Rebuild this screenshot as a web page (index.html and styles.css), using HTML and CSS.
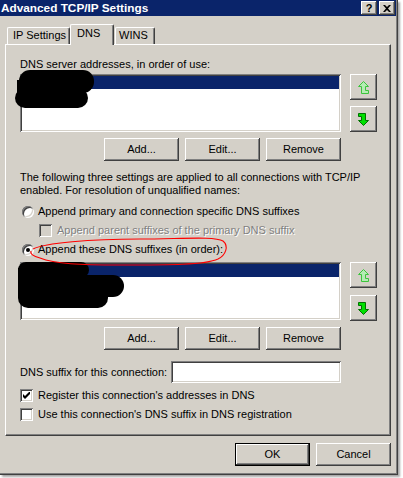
FILE: index.html
```html
<!DOCTYPE html>
<html>
<head>
<meta charset="utf-8">
<title>Advanced TCP/IP Settings</title>
<link rel="stylesheet" href="styles.css">
</head>
<body>
<div class="window">
  <div class="titlebar">
    <span class="title">Advanced TCP/IP Settings</span>
    <div class="capbtns">
      <span class="capbtn help">?</span>
      <span class="capbtn close"><svg width="8" height="7" viewBox="0 0 8 7"><path d="M0 0h2l2 2 2-2h2L5 3.5 8 7H6L4 5 2 7H0l3-3.5z" fill="#000"/></svg></span>
    </div>
  </div>

  <div class="tabs">
    <div class="tab tab-ip">IP Settings</div>
    <div class="tab tab-sel">DNS</div>
    <div class="tab tab-wins">WINS</div>
  </div>

  <div class="panel">
    <div class="label">DNS server addresses, in order of use:</div>
    <div class="listrow">
      <div class="listbox lb1"><div class="selrow"></div></div>
      <div class="sidebtns">
        <div class="btn sq"><svg width="11" height="13" viewBox="0 0 11 13"><polygon class="up" points="0.5,0.5 7.5,0.5 7.5,7.5 10.5,7.5 5.5,12.5 0.5,7.5 3.5,7.5 3.5,3.5 0.5,3.5" transform="rotate(180 5.5 6.5)"/></svg></div>
        <div class="btn sq"><svg width="11" height="13" viewBox="0 0 11 13"><polygon class="down" points="0.5,0.5 7.5,0.5 7.5,7.5 10.5,7.5 5.5,12.5 0.5,7.5 3.5,7.5 3.5,3.5 0.5,3.5"/></svg></div>
      </div>
    </div>
    <div class="btnrow">
      <div class="btn">Add...</div>
      <div class="btn">Edit...</div>
      <div class="btn">Remove</div>
    </div>

    <p class="para">The following three settings are applied to all connections with TCP/IP<br>enabled. For resolution of unqualified names:</p>

    <div class="opt radio-row first"><span class="radio"></span><span>Append primary and connection specific DNS suffixes</span></div>
    <div class="opt chk-row sub"><span class="check dis"></span><span class="dtext">Append parent suffixes of the primary DNS suffix</span></div>
    <div class="opt radio-row"><span class="radio on"></span><span>Append these DNS suffixes (in order):</span></div>

    <div class="listrow lr2">
      <div class="listbox lb2"><div class="selrow"></div></div>
      <div class="sidebtns">
        <div class="btn sq"><svg width="11" height="13" viewBox="0 0 11 13"><polygon class="up" points="0.5,0.5 7.5,0.5 7.5,7.5 10.5,7.5 5.5,12.5 0.5,7.5 3.5,7.5 3.5,3.5 0.5,3.5" transform="rotate(180 5.5 6.5)"/></svg></div>
        <div class="btn sq"><svg width="11" height="13" viewBox="0 0 11 13"><polygon class="down" points="0.5,0.5 7.5,0.5 7.5,7.5 10.5,7.5 5.5,12.5 0.5,7.5 3.5,7.5 3.5,3.5 0.5,3.5"/></svg></div>
      </div>
    </div>
    <div class="btnrow">
      <div class="btn">Add...</div>
      <div class="btn">Edit...</div>
      <div class="btn">Remove</div>
    </div>

    <div class="suffix">
      <span class="suffix-label">DNS suffix for this connection:</span>
      <div class="input"></div>
    </div>
    <div class="opt chk-row low"><span class="check"><svg width="7" height="7" viewBox="0 0 7 7"><path d="M0 2v3l2 2 5-5V-1L2 4z" fill="#000"/></svg></span><span>Register this connection's addresses in DNS</span></div>
    <div class="opt chk-row low"><span class="check"></span><span>Use this connection's DNS suffix in DNS registration</span></div>
  </div>

  <div class="footer">
    <div class="btn default">OK</div>
    <div class="btn">Cancel</div>
  </div>

  <svg class="overlay" width="403" height="478" viewBox="0 0 403 478">
    <g fill="#000">
      <rect x="19" y="70" width="75" height="23" rx="11"/>
      <rect x="15" y="88" width="73" height="20" rx="10"/>
      <rect x="17" y="80" width="40" height="16"/>
      <rect x="18" y="262" width="71" height="16" rx="8"/>
      <rect x="18" y="275" width="106" height="22" rx="11"/>
      <rect x="18" y="287" width="90" height="21" rx="10"/>
      <rect x="18" y="268" width="30" height="30"/>
    </g>
    <path d="M33 249 C45 243, 90 239, 140 239 C180 239, 215 236, 223 241 C229 246, 226 255, 218 259 C205 265, 170 265, 120 265 C80 265, 55 264, 40 258 C33 256, 30 254, 31 251" fill="none" stroke="#f00" stroke-width="1.1"/>
  </svg>
</div>
</body>
</html>
```

FILE: styles.css
```css
* { box-sizing: border-box; }

html, body {
  margin: 0;
  padding: 0;
  background: #ffffff;
}

body {
  font-family: "Liberation Sans", Arial, sans-serif;
  font-size: 11px;
  color: #000;
  width: 403px;
  height: 478px;
  overflow: hidden;
}

.window {
  position: relative;
  width: 398px;
  height: 475px;
  background: #d4d0c8;
  border-right: 1px solid #404040;
  border-bottom: 1px solid #404040;
  box-shadow: inset -1px -1px #808080, 2px 2px 2px rgba(0, 0, 0, 0.35);
}

.titlebar {
  height: 16px;
  margin-right: 1px;
  background: #0a246a;
  display: flex;
  align-items: center;
  justify-content: space-between;
  padding: 0 1px 0 1px;
}

.title {
  color: #fff;
  font-weight: bold;
  font-size: 11.8px;
  line-height: 16px;
  white-space: nowrap;
}

.capbtns {
  display: flex;
  gap: 2px;
}

.capbtn {
  width: 16px;
  height: 14px;
  background: #d4d0c8;
  box-shadow: inset -1px -1px #404040, inset 1px 1px #fff, inset -2px -2px #808080;
  display: flex;
  align-items: center;
  justify-content: center;
  font-weight: bold;
  font-size: 11px;
  line-height: 14px;
}

.capbtn.close svg { display: block; }

.tabs {
  display: flex;
  align-items: flex-end;
  height: 20px;
  margin-top: 8px;
  padding-left: 7px;
}

.tab {
  height: 17px;
  border-left: 1px solid #fff;
  border-top: 1px solid #fff;
  border-right: 1px solid #404040;
  border-radius: 2px 2px 0 0;
  box-shadow: inset -1px 0 #808080;
  line-height: 13px;
  padding-top: 1px;
  white-space: nowrap;
}

.tab-ip { width: 63px; padding-left: 5px; }

.tab-sel {
  position: relative;
  z-index: 1;
  width: 44px;
  height: 21px;
  margin-bottom: -1px;
  padding-left: 6px;
  padding-top: 2px;
  background: #d4d0c8;
}

.tab-wins { width: 40px; margin-left: 1px; padding-left: 3px; }

.panel {
  margin-left: 5px;
  width: 386px;
  height: 392px;
  border-left: 1px solid #fff;
  border-top: 1px solid #fff;
  border-right: 1px solid #404040;
  border-bottom: 1px solid #404040;
  box-shadow: inset -1px -1px #808080;
  padding: 13px 0 0 14px;
}

.label, .para, .opt, .suffix-label {
  line-height: 13px;
  white-space: nowrap;
}

.listrow {
  display: flex;
  margin-top: 3px;
}

.listbox {
  width: 321px;
  height: 58px;
  background: #fff;
  padding: 2px;
  box-shadow: inset 1px 1px #808080, inset -1px -1px #fff, inset 2px 2px #404040, inset -2px -2px #d4d0c8;
}

.selrow {
  height: 13px;
  background: #0a246a;
}

.sidebtns {
  display: flex;
  flex-direction: column;
  gap: 6px;
  margin-left: 9px;
}

.lr2 { margin-top: 6px; }
.lr2 .sidebtns { gap: 7px; }

.btn {
  background: #d4d0c8;
  box-shadow: inset -1px -1px #404040, inset 1px 1px #fff, inset -2px -2px #808080;
  display: flex;
  align-items: center;
  justify-content: center;
  width: 75px;
  height: 23px;
  line-height: 13px;
}

.btn.sq {
  width: 27px;
  height: 26px;
}

.btn.sq svg { display: block; }

.up { fill: #b4ecb4; stroke: #3cc43c; stroke-width: 1; }
.down { fill: #00e000; stroke: #007000; stroke-width: 1; }

.btnrow {
  display: flex;
  justify-content: flex-end;
  gap: 6px;
  width: 321px;
  margin-top: 6px;
}

.para {
  margin: 10px 0 0 0;
}

.opt {
  display: flex;
  align-items: center;
  height: 13px;
}

.radio-row { margin-top: 6px; }
.radio-row.first { margin-top: 8px; }

.radio {
  position: relative;
  width: 12px;
  height: 12px;
  margin-left: 2px;
  margin-right: 4px;
  border-radius: 50%;
  background: #fff;
  box-shadow: inset 1px 1px #808080, inset -1px -1px #fff, inset 2px 2px #404040, inset -2px -2px #d4d0c8;
}

.radio.on::after {
  content: "";
  position: absolute;
  left: 4px;
  top: 4px;
  width: 4px;
  height: 4px;
  border-radius: 50%;
  background: #000;
}

.chk-row { margin-top: 6px; }
.chk-row.sub { padding-left: 19px; }

.check {
  width: 13px;
  height: 13px;
  margin-right: 5px;
  background: #fff;
  box-shadow: inset 1px 1px #808080, inset -1px -1px #fff, inset 2px 2px #404040, inset -2px -2px #d4d0c8;
  display: flex;
  align-items: center;
  justify-content: center;
}

.check svg { display: block; }

.check.dis { background: #d4d0c8; }

.dtext {
  color: #808080;
  text-shadow: 1px 1px 0 #fff;
}

.suffix {
  display: flex;
  align-items: center;
  margin-top: 11px;
  height: 22px;
}

.suffix-label {
  width: 151px;
  flex: none;
}

.input {
  width: 170px;
  height: 22px;
  background: #fff;
  box-shadow: inset 1px 1px #808080, inset -1px -1px #fff, inset 2px 2px #404040, inset -2px -2px #d4d0c8;
}

.footer {
  display: flex;
  justify-content: flex-end;
  gap: 6px;
  width: 386px;
  margin-left: 5px;
  margin-top: 7px;
}

.btn.default {
  border: 1px solid #000;
}

.overlay {
  position: absolute;
  left: 0;
  top: 0;
  pointer-events: none;
}
```
